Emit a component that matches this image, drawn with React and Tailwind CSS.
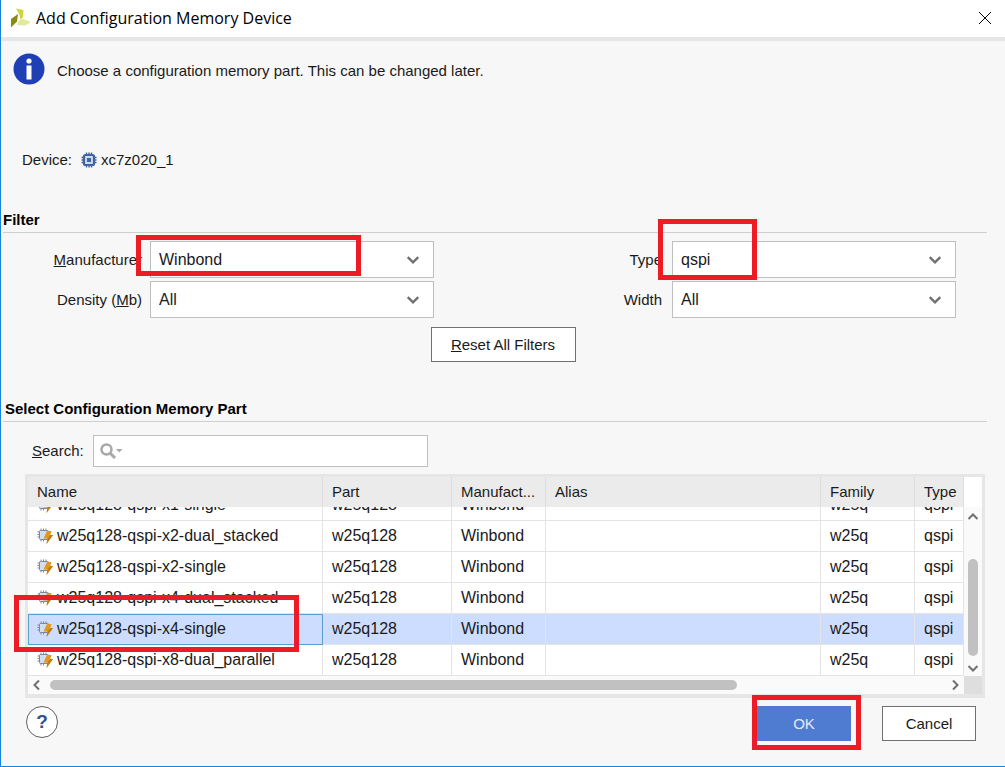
import { useState } from 'react';

const columns = ['Name', 'Part', 'Manufact...', 'Alias', 'Family', 'Type'];

const parts = [
  'w25q128-qspi-x1-single',
  'w25q128-qspi-x2-dual_stacked',
  'w25q128-qspi-x2-single',
  'w25q128-qspi-x4-dual_stacked',
  'w25q128-qspi-x4-single',
  'w25q128-qspi-x8-dual_parallel',
].map((name) => ({ name, part: 'w25q128', manufacturer: 'Winbond', alias: '', family: 'w25q', type: 'qspi' }));

const rowGrid = 'grid grid-cols-[295px_129px_94px_1fr_94px_49px]';

function Logo() {
  return (
    <svg className="size-5" viewBox="0 0 20 20" aria-hidden="true">
      <path d="M5 0.500 L12.500 2 L12 9 L9.500 12 L8.500 7 Z" fill="#cdd63f" />
      <path d="M0 11 L7 6 L6 13.500 L0 19.500 Z" fill="#8b8a10" />
      <path d="M8 12.500 L12 11 L20 14 L14 17.500 L6 17 Z" fill="#e3e99a" />
    </svg>
  );
}

function InfoIcon() {
  return (
    <svg className="size-8" viewBox="0 0 32 32" aria-hidden="true">
      <circle cx="16" cy="16" r="15.5" fill="#1f3fb4" />
      <circle cx="16" cy="8" r="2.6" fill="#fff" />
      <path d="M13.500 12.500h5v14h-5z" fill="#fff" />
    </svg>
  );
}

function ChipIcon() {
  return (
    <svg className="size-4" viewBox="0 0 16 16" fill="none" stroke="#41669f" aria-hidden="true">
      <rect x="3" y="3" width="10" height="10" rx="1.500" fill="#cfdaec" strokeWidth="2.200" />
      <rect x="6" y="6" width="4" height="4" fill="#41669f" stroke="none" />
      <path
        d="M5.500 0.500v2M8 0.500v2M10.500 0.500v2M5.500 13.500v2M8 13.500v2M10.500 13.500v2M0.500 5.500h2M0.500 8h2M0.500 10.500h2M13.500 5.500h2M13.500 8h2M13.500 10.500h2"
        strokeWidth="1.400"
      />
    </svg>
  );
}

function PartIcon() {
  return (
    <svg className="size-4 shrink-0" viewBox="0 0 16 16" aria-hidden="true">
      <rect x="2.500" y="2.500" width="9" height="9" rx="1" fill="#d3dff0" stroke="#7d8798" />
      <path
        d="M4 0.500v2M6.500 0.500v2M9 0.500v2M4 11.500v2M6.500 11.500v2M0.500 4h2M0.500 6.500h2M0.500 9h2"
        stroke="#7d8798"
      />
      <path d="M10 3h4.500l-1.200 4h2.700l-6.500 9 1-5.500h-4z" fill="#e2981f" />
      <path d="M13.300 7h2.700l-6.500 9 1-5.500z" fill="#c27a12" />
    </svg>
  );
}

function Chevron({ className, d, width = 2 }) {
  return (
    <svg className={className} viewBox="0 0 12 12" fill="none" stroke="#707070" strokeWidth={width} aria-hidden="true">
      <path d={d} />
    </svg>
  );
}

function Highlight({ className }) {
  return <div className={`pointer-events-none absolute border-5 border-[#ed1c24] ${className}`} />;
}

function Field({ id, label, labelClass, value, options, onChange, children }) {
  return (
    <>
      <label htmlFor={id} className={`text-right whitespace-nowrap ${labelClass}`}>{label}</label>
      <div className="relative text-[16px]">
        <select
          id={id}
          value={value}
          onChange={(e) => onChange(e.target.value)}
          className="block h-[37px] w-full appearance-none border border-[#bfbfbf] bg-white px-2"
        >
          {options.map((option) => <option key={option}>{option}</option>)}
        </select>
        <Chevron className="pointer-events-none absolute top-3 right-[14px] size-[14px]" d="M1.500 3.500 6 8l4.500-4.500" />
        {children}
      </div>
    </>
  );
}

function PartTable({ selected, onSelect }) {
  return (
    <div className="relative mt-[7px] mr-5 ml-6 border-3 border-b-4 border-[#e6e6e6] bg-white">
      <div className="flex">
        <table className="block min-w-0 flex-1">
          <thead className="block bg-[#ebebeb]">
            <tr className={rowGrid}>
              {columns.map((column) => (
                <th key={column} className="h-[30px] border-r border-[#dedede] pl-[9px] text-left leading-[30px] font-normal">
                  {column}
                </th>
              ))}
            </tr>
          </thead>
          <tbody className="flex h-[169px] flex-col justify-end overflow-hidden text-[16px]">
            {parts.map((row) => (
              <tr
                key={row.name}
                onClick={() => onSelect(row.name)}
                className={`${rowGrid} shrink-0 ${row.name === selected ? 'bg-[#ccddff]' : ''}`}
              >
                {Object.entries(row).map(([key, value]) => (
                  <td
                    key={key}
                    className={`flex h-[31px] items-center gap-1 border-r border-b border-[#e4e4e4] pl-[9px] ${
                      key === 'name' && row.name === selected ? 'outline -outline-offset-1 outline-[#5a9fd4]' : ''
                    }`}
                  >
                    {key === 'name' && <PartIcon />}
                    {value}
                  </td>
                ))}
              </tr>
            ))}
          </tbody>
        </table>
        <div className="flex w-[18px] flex-col items-center bg-[#fafafa]">
          <div className="h-[30px] w-full bg-white" />
          <Chevron className="mt-1 size-3" d="M1.500 8 6 3.500 10.500 8" />
          <div className="mt-9 w-[10px] flex-1 rounded-full bg-[#c1c1c1]" />
          <Chevron className="mt-[6px] mb-[2px] size-3" d="M1.500 4 6 8.500 10.500 4" />
        </div>
      </div>
      <div className="flex h-[18px] bg-[#fafafa]">
        <div className="flex min-w-0 flex-1 items-center gap-[7px] px-[3px]">
          <Chevron className="size-3" d="M8 1.500 3.500 6 8 10.500" />
          <div className="flex-1">
            <div className="h-[10px] w-[77%] rounded-full bg-[#c1c1c1]" />
          </div>
          <Chevron className="size-3" d="M4 1.500 8.500 6 4 10.500" />
        </div>
        <div className="w-[18px] bg-[#dedede]" />
      </div>
      <Highlight className="top-[118px] -left-[14px] h-[57px] w-[285px]" />
    </div>
  );
}

export default function App() {
  const [filters, setFilters] = useState({ manufacturer: 'Winbond', density: 'All', type: 'qspi', width: 'All' });
  const [search, setSearch] = useState('');
  const [selected, setSelected] = useState('w25q128-qspi-x4-single');

  const setFilter = (key) => (value) => setFilters({ ...filters, [key]: value });
  const resetFilters = () => setFilters({ manufacturer: 'All', density: 'All', type: 'All', width: 'All' });

  return (
    <div className="min-h-screen border-b border-l border-[#1883d7] bg-[#f7f7f7] font-['Liberation_Sans',Arial,sans-serif] text-[15px] leading-5 text-[#1a1a1a]">
      <header className="flex h-[41px] items-center border-b-4 border-[#e6e6e6] bg-white pr-[13px] pb-[2px] pl-[10px] text-black">
        <Logo />
        <h1 className="ml-[5px] flex-1 font-['Open_Sans',sans-serif] text-[16px]">Add Configuration Memory Device</h1>
        <button type="button" aria-label="Close">
          <svg className="size-[14px]" viewBox="0 0 14 14" fill="none" stroke="#000" aria-hidden="true">
            <path d="M1 1l12 12M13 1 1 13" />
          </svg>
        </button>
      </header>

      <main className="pb-[25px]">
        <div className="mt-3 flex h-8 items-center gap-3 pl-3">
          <InfoIcon />
          <p className="pt-1">Choose a configuration memory part. This can be changed later.</p>
        </div>

        <div className="mt-[65px] flex items-center pl-[21px]">
          <span>Device:</span>
          <span className="ml-[9px] flex items-center gap-1"><ChipIcon />xc7z020_1</span>
        </div>

        <h2 className="mt-10 mr-[18px] ml-[2px] h-[23px] border-b border-[#cfcfcf] font-bold text-black">Filter</h2>
        <div className="mt-2 grid grid-cols-[149px_1fr_238px_1fr] items-center gap-y-[3px] pr-[49px]">
          <Field
            id="manufacturer"
            label={<><u>M</u>anufacturer</>}
            labelClass="pr-2"
            value={filters.manufacturer}
            options={['Winbond', 'All']}
            onChange={setFilter('manufacturer')}
          >
            <Highlight className="-top-[6px] -left-[14px] h-[41px] w-[225px]" />
          </Field>
          <Field id="type" label="Type" labelClass="pr-[10px]" value={filters.type} options={['qspi', 'All']} onChange={setFilter('type')}>
            <Highlight className="-top-[22px] -left-[14px] h-[61px] w-[99px]" />
          </Field>
          <Field
            id="density"
            label={<>Density (<u>M</u>b)</>}
            labelClass="pr-2"
            value={filters.density}
            options={['All']}
            onChange={setFilter('density')}
          />
          <Field id="width" label="Width" labelClass="pr-[10px]" value={filters.width} options={['All']} onChange={setFilter('width')} />
        </div>
        <div className="mt-[9px] flex justify-center">
          <button type="button" onClick={resetFilters} className="h-[35px] w-[145px] border border-[#707070] bg-white">
            <u>R</u>eset All Filters
          </button>
        </div>

        <h2 className="mt-[37px] mr-[18px] ml-[2px] h-[23px] border-b border-[#cfcfcf] pl-[2px] font-bold text-black">
          Select Configuration Memory Part
        </h2>
        <div className="mt-[13px] flex items-center pl-[31px]">
          <label htmlFor="search" className="w-[61px]"><u>S</u>earch:</label>
          <div className="relative">
            <input
              id="search"
              value={search}
              onChange={(e) => setSearch(e.target.value)}
              className="block h-8 w-[335px] border border-[#bfbfbf] bg-white pr-2 pl-9"
            />
            <svg className="pointer-events-none absolute top-2 left-[7px] h-4 w-6" viewBox="0 0 24 16" fill="none" aria-hidden="true">
              <circle cx="6.500" cy="6.500" r="5" stroke="#a8a8a8" strokeWidth="2.500" />
              <path d="M10 10l5 5" stroke="#a8a8a8" strokeWidth="3" />
              <path d="M16 6h6.500l-3.200 3.500z" fill="#a8a8a8" />
            </svg>
          </div>
        </div>

        <PartTable selected={selected} onSelect={setSelected} />

        <footer className="mt-2 flex items-start pr-[29px] pl-[25px]">
          <button type="button" aria-label="Help" className="size-8 rounded-full border border-[#606060] bg-white text-[19px] font-bold text-[#34508f]">
            ?
          </button>
          <div className="relative ml-auto">
            <button type="button" className="h-[35px] w-[94px] bg-[#4f7bd0] text-[#e4ebf8]">OK</button>
            <Highlight className="-top-[11px] -left-[5px] h-[55px] w-[109px]" />
          </div>
          <button type="button" className="ml-[31px] h-[35px] w-[94px] border border-[#707070] bg-white">Cancel</button>
        </footer>
      </main>
    </div>
  );
}
